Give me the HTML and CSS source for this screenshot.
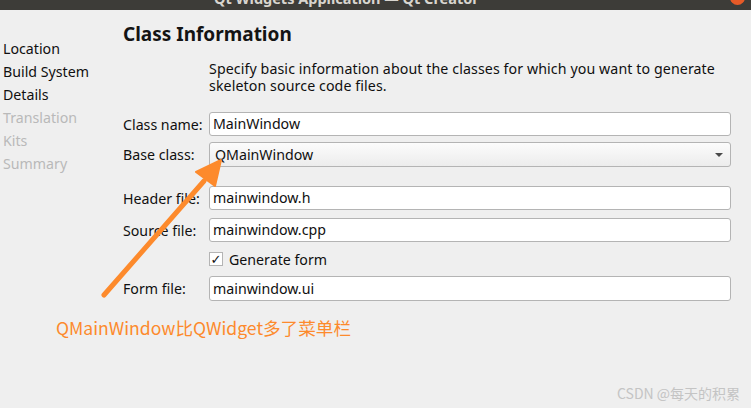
FILE: index.html
```html
<!DOCTYPE html>
<html>
<head>
<meta charset="utf-8">
<link rel="stylesheet" href="styles.css">
</head>
<body>
<div class="titlebar">
  <span class="wintitle">Qt Widgets Application — Qt Creator</span>
  <span class="closebtn"></span>
</div>
<div class="main">
  <ul class="steps">
    <li>Location</li>
    <li>Build System</li>
    <li>Details</li>
    <li class="off">Translation</li>
    <li class="off">Kits</li>
    <li class="off">Summary</li>
  </ul>
  <div class="page">
    <h1 class="heading">Class Information</h1>
    <p class="desc">Specify basic information about the classes for which you want to generate skeleton source code files.</p>
    <div class="form">
      <div class="row r1"><span class="label">Class name:</span><span class="field">MainWindow</span></div>
      <div class="row r2"><span class="label">Base class:</span><span class="field combo">QMainWindow<span class="caret"></span></span></div>
      <div class="row r3"><span class="label">Header file:</span><span class="field">mainwindow.h</span></div>
      <div class="row r4"><span class="label">Source file:</span><span class="field">mainwindow.cpp</span></div>
      <div class="row r5"><span class="label"></span><span class="check"><span class="box">✓</span>Generate form</span></div>
      <div class="row r6"><span class="label">Form file:</span><span class="field">mainwindow.ui</span></div>
    </div>
  </div>
</div>
<div class="annot">
  <svg class="arrow" width="751" height="408" viewBox="0 0 751 408">
    <line x1="104" y1="295" x2="204" y2="181" stroke="#fd8a2c" stroke-width="5" stroke-linecap="round"/>
    <polygon points="221,160 196,172 215,186" fill="#fd8a2c" stroke="#fd8a2c" stroke-width="2" stroke-linejoin="round"/>
  </svg>
  <span class="note">QMainWindow比QWidget多了菜单栏</span>
  <span class="mark">CSDN @每天的积累</span>
</div>
</body>
</html>
```
FILE: styles.css
```css
html, body {
  margin: 0;
  padding: 0;
}
body {
  width: 751px;
  height: 408px;
  overflow: hidden;
  background: #efefef;
  font-family: "Noto Sans", "DejaVu Sans", sans-serif;
  font-size: 14.2px;
  color: #101010;
  position: relative;
}
.titlebar {
  height: 10px;
  background: #3d3c38;
  overflow: hidden;
  display: flex;
  justify-content: space-between;
  align-items: flex-end;
}
.wintitle {
  margin-left: 214px;
  color: #d8d5cf;
  font-weight: bold;
  font-size: 14.5px;
  line-height: 14px;
  margin-bottom: 5px;
}
.closebtn {
  width: 15px;
  height: 15px;
  border-radius: 50%;
  background: #e65a27;
  margin-right: 6px;
  margin-bottom: 5px;
  flex: none;
}
.main {
  display: flex;
}
.steps {
  list-style: none;
  margin: 0;
  padding: 27px 0 0 3px;
  width: 120px;
}
.steps li {
  line-height: 23px;
  height: 23px;
  white-space: nowrap;
}
.steps li.off {
  color: #b9b9b9;
}
.page {
  flex: 1;
}
.heading {
  margin: 12px 0 0 0;
  font-size: 19px;
  line-height: 24px;
  font-weight: bold;
  color: #141414;
}
.desc {
  margin: 14px 0 0 86px;
  width: 524px;
  line-height: 17px;
  letter-spacing: 0.1px;
}
.form {
  margin-top: 18px;
  width: 608px;
}
.row {
  display: flex;
  align-items: center;
  height: 24px;
}
.r2 { margin-top: 6px; }
.r3 { margin-top: 20px; }
.r4 { margin-top: 8px; }
.r5 { margin-top: 8px; height: 18px; }
.r6 { margin-top: 8px; height: 25px; }
.label {
  width: 86px;
  flex: none;
  white-space: nowrap;
}
.field {
  flex: 1;
  height: 22px;
  line-height: 22px;
  border: 1px solid #b4b4b4;
  border-radius: 3px;
  background: #ffffff;
  padding-left: 3px;
  position: relative;
}
.r2 .field, .r6 .field {
  height: 23px;
  line-height: 23px;
}
.combo {
  background: linear-gradient(#fcfcfc, #ececec);
  padding-left: 5px;
}
.caret {
  position: absolute;
  right: 7px;
  top: 10px;
  width: 0;
  height: 0;
  border-left: 4px solid transparent;
  border-right: 4px solid transparent;
  border-top: 4px solid #4a4a4a;
}
.check {
  display: flex;
  align-items: center;
}
.box {
  width: 12px;
  height: 12px;
  border: 1px solid #b4b4b4;
  background: #fff;
  margin-right: 6px;
  font-size: 13px;
  font-weight: bold;
  line-height: 12px;
  text-align: center;
  color: #111;
}
.annot {
  position: absolute;
  left: 0;
  top: 0;
  width: 751px;
  height: 408px;
  pointer-events: none;
}
.arrow {
  position: absolute;
  left: 0;
  top: 0;
}
.note {
  position: absolute;
  left: 56px;
  top: 316px;
  font-family: "Noto Sans CJK SC", sans-serif;
  font-size: 17.6px;
  line-height: 24px;
  color: #fd8a2c;
  white-space: nowrap;
}
.mark {
  position: absolute;
  left: 617px;
  top: 384px;
  font-family: "Noto Sans CJK SC", sans-serif;
  font-size: 14px;
  line-height: 18px;
  color: #c4c4c4;
  white-space: nowrap;
}
```
